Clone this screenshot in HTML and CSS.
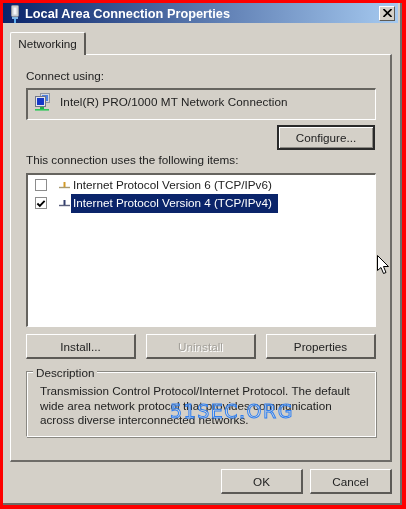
FILE: index.html
```html
<!DOCTYPE html>
<html>
<head>
    <meta charset="utf-8">
    <title>Local Area Connection Properties</title>
    <link rel="stylesheet" href="styles.css">
</head>
<body>
    <div class="window">
        <!-- Title bar -->
        <div class="titlebar">
            <svg class="title-icon" width="10" height="18" viewBox="0 0 10 18">
                <rect x="1.5" y="0.5" width="7" height="11" rx="1" fill="#c9ccd2" stroke="#8d939c"/>
                <rect x="3.5" y="2.5" width="3" height="7" fill="#f4f5f7"/>
                <rect x="2" y="12" width="6" height="2" fill="#7fb4e4"/>
                <rect x="4" y="14" width="2" height="4" fill="#62b0f0"/>
            </svg>
            <span class="title-text">Local Area Connection Properties</span>
            <div class="close">
                <svg width="9" height="8" viewBox="0 0 9 8">
                    <path d="M0.5 0 L8.5 8 M8.5 0 L0.5 8" stroke="#000" stroke-width="1.6" fill="none"/>
                </svg>
            </div>
        </div>

        <div class="content">
            <div class="tabs">
                <div class="tab">Networking</div>
            </div>

            <div class="panel">
                <div class="label">Connect using:</div>
                <div class="adapter">
                    <svg width="17" height="18" viewBox="0 0 17 18">
                        <rect x="6.5" y="0.5" width="9" height="9" fill="#d4d8e0" stroke="#8f96a4"/>
                        <rect x="8" y="2" width="6" height="6" fill="#4f80e0"/>
                        <rect x="1.5" y="3.5" width="10" height="10" fill="#e4e6ec" stroke="#6f7688"/>
                        <rect x="3" y="5" width="7" height="7" fill="#1438c8"/>
                        <rect x="6" y="14" width="4" height="2" fill="#20b048"/>
                        <rect x="1" y="16" width="14" height="1.6" fill="#2ec858"/>
                    </svg>
                    <span class="adapter-name">Intel(R) PRO/1000 MT Network Connection</span>
                </div>
                <div class="configure-row">
                    <button class="btn btn-default btn-configure">Configure...</button>
                </div>

                <div class="label label-items">This connection uses the following items:</div>
                <div class="list">
                    <div class="item">
                        <span class="check"></span>
                        <svg class="proto" width="11" height="8" viewBox="0 0 11 8">
                            <path d="M0 6.5 H11" stroke="#a89a70" stroke-width="1.4"/>
                            <path d="M5.5 1 V6" stroke="#d29a28" stroke-width="2"/>
                        </svg>
                        <span class="item-text">Internet Protocol Version 6 (TCP/IPv6)</span>
                    </div>
                    <div class="item">
                        <span class="check">
                            <svg width="11" height="11" viewBox="0 0 11 11">
                                <path d="M1.5 5.5 L4.2 8.2 L9.5 2.5" stroke="#000" stroke-width="2" fill="none"/>
                            </svg>
                        </span>
                        <svg class="proto" width="11" height="8" viewBox="0 0 11 8">
                            <path d="M0 6.5 H11" stroke="#5a5f7c" stroke-width="1.4"/>
                            <path d="M5.5 1 V6" stroke="#34406e" stroke-width="2"/>
                        </svg>
                        <span class="item-text selected">Internet Protocol Version 4 (TCP/IPv4)</span>
                    </div>
                </div>

                <div class="list-buttons">
                    <button class="btn">Install...</button>
                    <button class="btn btn-disabled">Uninstall</button>
                    <button class="btn">Properties</button>
                </div>

                <div class="groupbox">
                    <div class="legend">Description</div>
                    <p class="desc">Transmission Control Protocol/Internet Protocol. The default<br>wide area network protocol that provides communication<br>across diverse interconnected networks.</p>
                </div>
            </div>

            <div class="footer">
                <button class="btn btn-footer">OK</button>
                <button class="btn btn-footer">Cancel</button>
            </div>
        </div>
        <div class="watermark">51SEC.ORG</div>
        <svg class="cursor" width="14" height="20" viewBox="0 0 14 20">
            <path d="M0.5 0.5 V15.5 L4 12.5 L6.5 18.5 L9 17.5 L6.5 11.5 H11.5 Z" fill="#fff" stroke="#000" stroke-width="1"/>
        </svg>
    </div>
</body>
</html>
```

FILE: styles.css
```css
html, body {
    margin: 0;
    height: 100%;
    background: #fe0000;
    overflow: hidden;
}

.window {
    position: relative;
    box-sizing: border-box;
    width: 399px;
    height: 502px;
    margin: 3px 0 0 3px;
    background: #d4d0c8;
    border-right: 2px solid #6e6c68;
    border-bottom: 2px solid #6e6c68;
    font-family: Tahoma, "Liberation Sans", sans-serif;
    font-size: 11.7px;
    color: #222;
    filter: blur(0.35px);
}

/* Title bar */

.titlebar {
    display: flex;
    align-items: center;
    height: 20px;
    margin-right: 2px;
    background: linear-gradient(to right, #0a246a, #a6caf0);
}

.title-icon {
    margin: 2px 0 0 7px;
    flex: none;
}

.title-text {
    margin-left: 5px;
    flex: 1;
    color: #fff;
    font-weight: bold;
    font-size: 12.75px;
    white-space: nowrap;
}

.close {
    display: flex;
    align-items: center;
    justify-content: center;
    box-sizing: border-box;
    width: 16px;
    height: 15px;
    margin-right: 3px;
    background: #d4d0c8;
    border: 1px solid;
    border-color: #fff #5c5a56 #5c5a56 #fff;
}

/* Tabs */

.content {
    padding: 9px 8px 0 7px;
}

.tabs {
    display: flex;
    position: relative;
    z-index: 1;
    margin-bottom: -1px;
}

.tab {
    box-sizing: border-box;
    width: 76px;
    height: 23px;
    line-height: 21px;
    text-align: center;
    background: #d4d0c8;
    border-top: 1px solid #fff;
    border-left: 1px solid #fff;
    border-right: 2px solid #5c5a56;
    border-radius: 2px 2px 0 0;
}

.panel {
    box-sizing: border-box;
    width: 382px;
    height: 408px;
    padding: 14px 14px 0 15px;
    border: 1px solid #fff;
    border-right: 2px solid #6e6c68;
    border-bottom: 2px solid #6e6c68;
}

.label {
    height: 15px;
    line-height: 13px;
}

.adapter {
    display: flex;
    align-items: center;
    gap: 9px;
    box-sizing: border-box;
    height: 32px;
    margin-top: 4px;
    padding: 0 0 6px 6px;
    border: 1px solid #fff;
    border-top: 2px solid #66645f;
    border-left: 2px solid #66645f;
}

.adapter-name {
    letter-spacing: 0.08px;
}

.configure-row {
    display: flex;
    justify-content: flex-end;
    margin-top: 5px;
    padding-right: 1px;
}

.label-items {
    margin-top: 3px;
}

/* Buttons */

.btn {
    box-sizing: border-box;
    height: 25px;
    padding: 0;
    background: #d4d0c8;
    border: 1px solid;
    border-color: #fff #5c5a56 #5c5a56 #fff;
    border-right-width: 2px;
    border-bottom-width: 2px;
    font-family: inherit;
    font-size: 11.7px;
    color: #222;
}

.btn-default {
    border: 2px solid #2a2a2a;
    box-shadow: inset 1px 1px 0 #fff, inset -1px -1px 0 #8a8882;
}

.btn-configure {
    width: 98px;
}

.btn-disabled {
    color: #a3a09a;
    text-shadow: 1px 1px 0 #fff;
}

.btn-footer {
    width: 82px;
}

/* Item list */

.list {
    box-sizing: border-box;
    height: 154px;
    margin-top: 5px;
    padding-top: 1px;
    background: #fff;
    border: 2px solid #66645f;
    border-right: 1px solid #fff;
    border-bottom: 1px solid #fff;
}

.item {
    display: flex;
    align-items: center;
    height: 18px;
    padding-left: 7px;
}

.check {
    display: flex;
    align-items: center;
    justify-content: center;
    box-sizing: border-box;
    width: 12px;
    height: 12px;
    background: #fff;
    border: 1px solid #8c8c8c;
}

.proto {
    margin-left: 12px;
}

.item-text {
    align-self: flex-start;
    margin-left: 1px;
    padding: 0 6px 0 2px;
    height: 19px;
    line-height: 18px;
    white-space: nowrap;
}

.selected {
    background: #0a246a;
    color: #fff;
}

.list-buttons {
    display: flex;
    justify-content: space-between;
    margin-top: 7px;
}

.list-buttons .btn {
    width: 110px;
}

/* Description */

.groupbox {
    position: relative;
    box-sizing: border-box;
    height: 66px;
    margin-top: 12px;
    padding: 12px 0 0 13px;
    border: 1px solid #fff;
    border-top: 1px solid #8a8882;
    border-left: 1px solid #8a8882;
    box-shadow: inset 1px 1px 0 #fff, 1px 1px 0 #8a8882;
}

.legend {
    position: absolute;
    top: -6px;
    left: 6px;
    padding: 0 3px;
    background: #d4d0c8;
    line-height: 14px;
}

.desc {
    margin: 0;
    line-height: 14.5px;
    white-space: nowrap;
}

.footer {
    display: flex;
    justify-content: flex-end;
    gap: 7px;
    margin-top: 7px;
}

/* Things lying over the dialog */

.watermark {
    position: absolute;
    left: 167px;
    top: 397px;
    font-family: "DejaVu Sans", sans-serif;
    font-size: 19px;
    letter-spacing: 1.5px;
    color: rgba(235, 240, 250, 0.35);
    -webkit-text-stroke: 1px #2f7ff0;
}

.cursor {
    position: absolute;
    left: 374px;
    top: 252px;
}
```
